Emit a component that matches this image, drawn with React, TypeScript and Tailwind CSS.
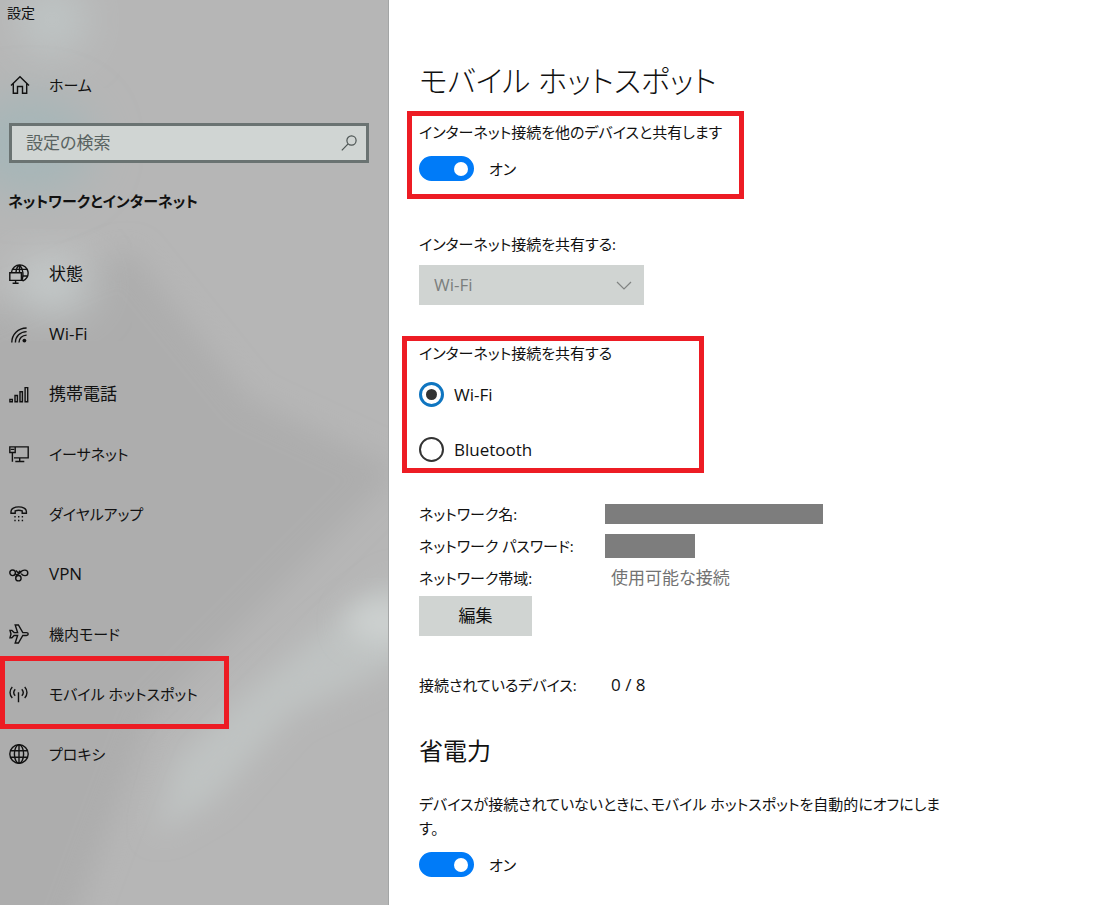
import type { ReactNode } from "react";

function Icon({ children }: { children: ReactNode }) {
  return (
    <svg
      viewBox="0 0 20 20"
      className="h-5 w-5 shrink-0"
      fill="none"
      stroke="currentColor"
      strokeWidth="1.4"
      aria-hidden="true"
    >
      {children}
    </svg>
  );
}

const HomeIcon = () => (
  <Icon>
    <path d="M1 10.5 10 1.8l9 8.7M3.3 8.6v9.7h4.2v-6.8h5v6.8h4.2V8.6" />
  </Icon>
);

const StatusIcon = () => (
  <Icon>
    <path d="M2.6 8A8.300 8.300 0 1 1 13.600 17M3.600 5.400h13.600M13.400 12h5M10.400 .9C8.200 2.500 7.200 5 7 8.600M10.600 .9c3.600 3.800 4.200 10.400 2.200 15.900M10.500 1v7.600" />
    <path d="M.8 8.800h11.600v7.600H.8zM6.600 16.400v2.800M3.600 19.200h6" />
  </Icon>
);

const WifiIcon = () => (
  <Icon>
    <path d="M2.800 18.600C2.800 10.400 9 4.200 17.600 4M6.400 18.600c0-6.200 4.800-10.800 11.200-11M10 18.600c0-4.200 3.200-7.300 7.600-7.500" />
    <circle cx="15.400" cy="16.600" r="1.900" fill="currentColor" stroke="none" />
  </Icon>
);

const CellularIcon = () => (
  <Icon>
    <path d="M.9 15.400h2.400v2.400H.9zM6 11.500h2.400v6.300H6zM11 7.800h2.400v10H11zM16.100 3.600h2.600v14.200h-2.600z" />
  </Icon>
);

const EthernetIcon = () => (
  <Icon>
    <path d="M6 2.900h13.200v11H5M10.700 13.900v3.500M6.300 17.500h9M.8 2.900h5.400v5.600H.8zM3.400 8.500v9.300M1.800 5.400h3.400" />
  </Icon>
);

const DialupIcon = () => (
  <Icon>
    <path d="M2 7.600c0-2.900 3.600-4.700 7.700-4.700s7.700 1.800 7.700 4.700v1.700h-4.200V6.800C11 6.100 8.400 6.100 6.200 6.800v2.500H2z" />
    <path d="M6 11.900v1.500M9.700 11.900v1.500M13.400 11.900v1.500M6 15.700v1.500M9.700 15.700v1.500M13.400 15.700v1.500" />
  </Icon>
);

const VpnIcon = () => (
  <Icon>
    <circle cx="3.600" cy="8.800" r="2.800" />
    <circle cx="9.400" cy="14.200" r="2.700" />
    <path d="M7 13.200c.4-2.600 3.400-3.200 4.800-5.200 1.800-2.600 7-2.600 7 .9s-4.800 3.400-6.600.8M6.200 9.800c1.400 1.400 2.400 1 3.400 0M7 6.600l2.200 2.300 2-2.300" />
  </Icon>
);

const AirplaneIcon = () => (
  <Icon>
    <path d="M1 6.400h1.900l2.200 2.200h3.500L6.200 1h3.200l4.400 7.600h3.600c2.400 0 2.400 2.900 0 2.900h-3.600L9.400 19H6.200l2.400-7.500H5.100l-2.200 2.200H1l1-3.700z" />
  </Icon>
);

const HotspotIcon = () => (
  <Icon>
    <path d="M9.500 8.300v9.900M3.300 2.900c-3 3-3 8.200 0 11.200M6.200 5.200c-1.700 1.900-1.700 4.700 0 6.600M12.800 5.200c1.700 1.900 1.700 4.700 0 6.600M15.700 2.900c3 3 3 8.200 0 11.200" />
  </Icon>
);

const ProxyIcon = () => (
  <Icon>
    <circle cx="10" cy="10" r="9.200" />
    <ellipse cx="10" cy="10" rx="4.600" ry="9.200" />
    <path d="M10 .8v18.400M1.600 6.700h16.800M1.600 13.300h16.800" />
  </Icon>
);

const navItems = [
  { label: "状態", size: "text-[17px]", icon: <StatusIcon /> },
  { label: "Wi-Fi", size: "text-[17px]", icon: <WifiIcon /> },
  { label: "携帯電話", size: "text-[17px]", icon: <CellularIcon /> },
  { label: "イーサネット", size: "text-[15px]", icon: <EthernetIcon /> },
  { label: "ダイヤルアップ", size: "text-[15px]", icon: <DialupIcon /> },
  { label: "VPN", size: "text-[17px]", icon: <VpnIcon /> },
  { label: "機内モード", size: "text-[15px]", icon: <AirplaneIcon /> },
  { label: "モバイル ホットスポット", size: "text-[15px]", icon: <HotspotIcon />, current: true },
  { label: "プロキシ", size: "text-[15px]", icon: <ProxyIcon /> },
];

function Highlight({ className }: { className: string }) {
  return <div className={`pointer-events-none absolute border-5 border-[#ed1c24] ${className}`} />;
}

function Toggle({ label }: { label: string }) {
  return (
    <label className="flex w-fit items-center gap-[15px]">
      <input
        type="checkbox"
        role="switch"
        defaultChecked
        className="flex h-[25px] w-[55px] appearance-none items-center rounded-full border-2 border-[#333] px-1 before:h-3.5 before:w-3.5 before:rounded-full before:bg-[#333] before:content-[''] checked:justify-end checked:border-[#007bf8] checked:bg-[#007bf8] checked:before:bg-white"
      />
      {label}
    </label>
  );
}

function Radio({ label, checked = false }: { label: string; checked?: boolean }) {
  return (
    <label className="flex w-fit items-center gap-2.5 text-[17px]">
      <input
        type="radio"
        name="share-over"
        defaultChecked={checked}
        className="flex h-[25px] w-[25px] appearance-none items-center justify-center rounded-full border-2 border-[#333] checked:border-3 checked:border-[#0f75c0] checked:before:h-[11px] checked:before:w-[11px] checked:before:rounded-full checked:before:bg-[#333] checked:before:content-['']"
      />
      {label}
    </label>
  );
}

/* Blurred desktop wallpaper that shows through the translucent side pane. */
function Wallpaper() {
  return (
    <svg
      viewBox="0 0 388 905"
      preserveAspectRatio="none"
      className="absolute inset-0 h-full w-full"
      aria-hidden="true"
    >
      <defs>
        <filter id="soft" x="-50%" y="-50%" width="200%" height="200%">
          <feGaussianBlur stdDeviation="22" />
        </filter>
        <filter id="softer" x="-50%" y="-50%" width="200%" height="200%">
          <feGaussianBlur stdDeviation="14" />
        </filter>
      </defs>
      <rect width="388" height="905" fill="#b6b6b6" />
      <path d="M-60 330 130 250 250 400 400 470 290 580 150 720 60 960-60 960z" fill="#adadad" filter="url(#softer)" />
      <ellipse cx="52" cy="20" rx="34" ry="34" fill="#bfc6c6" filter="url(#soft)" />
      <ellipse cx="30" cy="145" rx="65" ry="50" fill="#a6b6b8" filter="url(#soft)" />
      <ellipse cx="52" cy="285" rx="40" ry="28" fill="#c6cccc" filter="url(#soft)" />
      <path d="M400 575 330 625 250 690 175 760 155 835 215 800 290 715 400 665z" fill="#bfc3c2" filter="url(#softer)" />
      <ellipse cx="385" cy="622" rx="38" ry="22" fill="#cdd1d0" filter="url(#softer)" />
    </svg>
  );
}

function Sidebar() {
  return (
    <aside className="relative w-[389px] shrink-0 border-r border-[#a3a5a5]">
      <Wallpaper />
      <div className="relative">
        <p className="pt-[3px] pl-[7px] text-sm leading-5">設定</p>
        <a href="#home" className="mt-[50px] flex h-6 items-center gap-[19px] pl-2.5">
          <HomeIcon />
          ホーム
        </a>
        <label className="mt-[26px] mr-[19px] ml-[9px] flex h-10 items-center border-3 border-[#6a7372] bg-[#d0d5d3] pr-2 pl-3.5 text-[17px]">
          <input
            type="search"
            aria-label="設定の検索"
            placeholder="設定の検索"
            className="min-w-0 flex-1 bg-transparent outline-none placeholder:text-[#596361]"
          />
          <svg
            viewBox="0 0 18 18"
            className="h-[18px] w-[18px]"
            fill="none"
            stroke="#4c5453"
            strokeWidth="1.2"
            aria-hidden="true"
          >
            <circle cx="11.500" cy="6.500" r="4.600" />
            <path d="M8.100 9.900 1.800 16.400" />
          </svg>
        </label>
        <h2 className="mt-[26px] pl-2 leading-6 font-bold">ネットワークとインターネット</h2>
        <nav className="mt-[31px]">
          <ul>
            {navItems.map((item) => (
              <li key={item.label} className="relative">
                <a
                  href="#"
                  aria-current={item.current ? "page" : undefined}
                  className={`flex h-15 items-center gap-5 pl-[9px] ${item.size}`}
                >
                  {item.icon}
                  {item.label}
                </a>
                {item.current && <Highlight className="-top-2 -bottom-[5px] left-0 w-[229px]" />}
              </li>
            ))}
          </ul>
        </nav>
      </div>
    </aside>
  );
}

export default function App() {
  return (
    <div
      lang="ja"
      className="flex min-h-screen bg-white font-['Open_Sans','Noto_Sans_CJK_JP',sans-serif] text-[15px] leading-6 text-[#111] [font-feature-settings:'palt']"
    >
      <Sidebar />
      <main className="min-w-0 flex-1 px-[30px] pt-[57px] pb-6">
        <h1 className="text-3xl leading-12 font-light">モバイル ホットスポット</h1>

        <section className="relative mt-[15px] w-fit">
          <p>インターネット接続を他のデバイスと共有します</p>
          <div className="mt-3">
            <Toggle label="オン" />
          </div>
          <Highlight className="-top-[9px] -bottom-[18px] -left-3 w-[337px]" />
        </section>

        <section className="mt-[51px]">
          <label htmlFor="source" className="block">
            インターネット接続を共有する:
          </label>
          <div className="relative mt-[9px] w-[225px]">
            <select
              id="source"
              disabled
              className="h-10 w-full appearance-none bg-[#d0d4d2] px-[15px] text-[17px] text-[#7b7e7d] opacity-100"
            >
              <option>Wi-Fi</option>
            </select>
            <svg
              viewBox="0 0 16 10"
              className="pointer-events-none absolute top-4 right-3 h-2.5 w-4"
              fill="none"
              stroke="#808382"
              strokeWidth="1.2"
              aria-hidden="true"
            >
              <path d="m1 1 7 7 7-7" />
            </svg>
          </div>
        </section>

        <div className="relative mt-9">
          <fieldset>
            <legend>インターネット接続を共有する</legend>
            <div className="mt-[17px] flex flex-col gap-[30px]">
              <Radio label="Wi-Fi" checked />
              <Radio label="Bluetooth" />
            </div>
          </fieldset>
          <Highlight className="-top-[5px] -bottom-[11px] -left-[17px] w-[302px]" />
        </div>

        <dl className="mt-9 grid auto-rows-[32px] grid-cols-[186px_1fr] items-center">
          <dt>ネットワーク名:</dt>
          <dd className="h-5 w-[218px] bg-[#7d7d7d]" />
          <dt>ネットワーク パスワード:</dt>
          <dd className="h-6 w-[90px] bg-[#7d7d7d]" />
          <dt>ネットワーク帯域:</dt>
          <dd className="pl-1.5 text-[17px] text-[#737373]">使用可能な接続</dd>
        </dl>
        <button type="button" className="mt-0.5 h-10 w-[113px] bg-[#d0d4d2] text-[17px]">
          編集
        </button>

        <dl className="mt-[37px] grid grid-cols-[192px_1fr] items-center">
          <dt>接続されているデバイス:</dt>
          <dd className="text-[17px]">0 / 8</dd>
        </dl>

        <section className="mt-[38px]">
          <h2 className="text-2xl leading-8">省電力</h2>
          <p className="mt-[25px] max-w-[540px]">
            デバイスが接続されていないときに、モバイル ホットスポットを自動的にオフにします。
          </p>
          <div className="mt-3">
            <Toggle label="オン" />
          </div>
        </section>
      </main>
    </div>
  );
}
